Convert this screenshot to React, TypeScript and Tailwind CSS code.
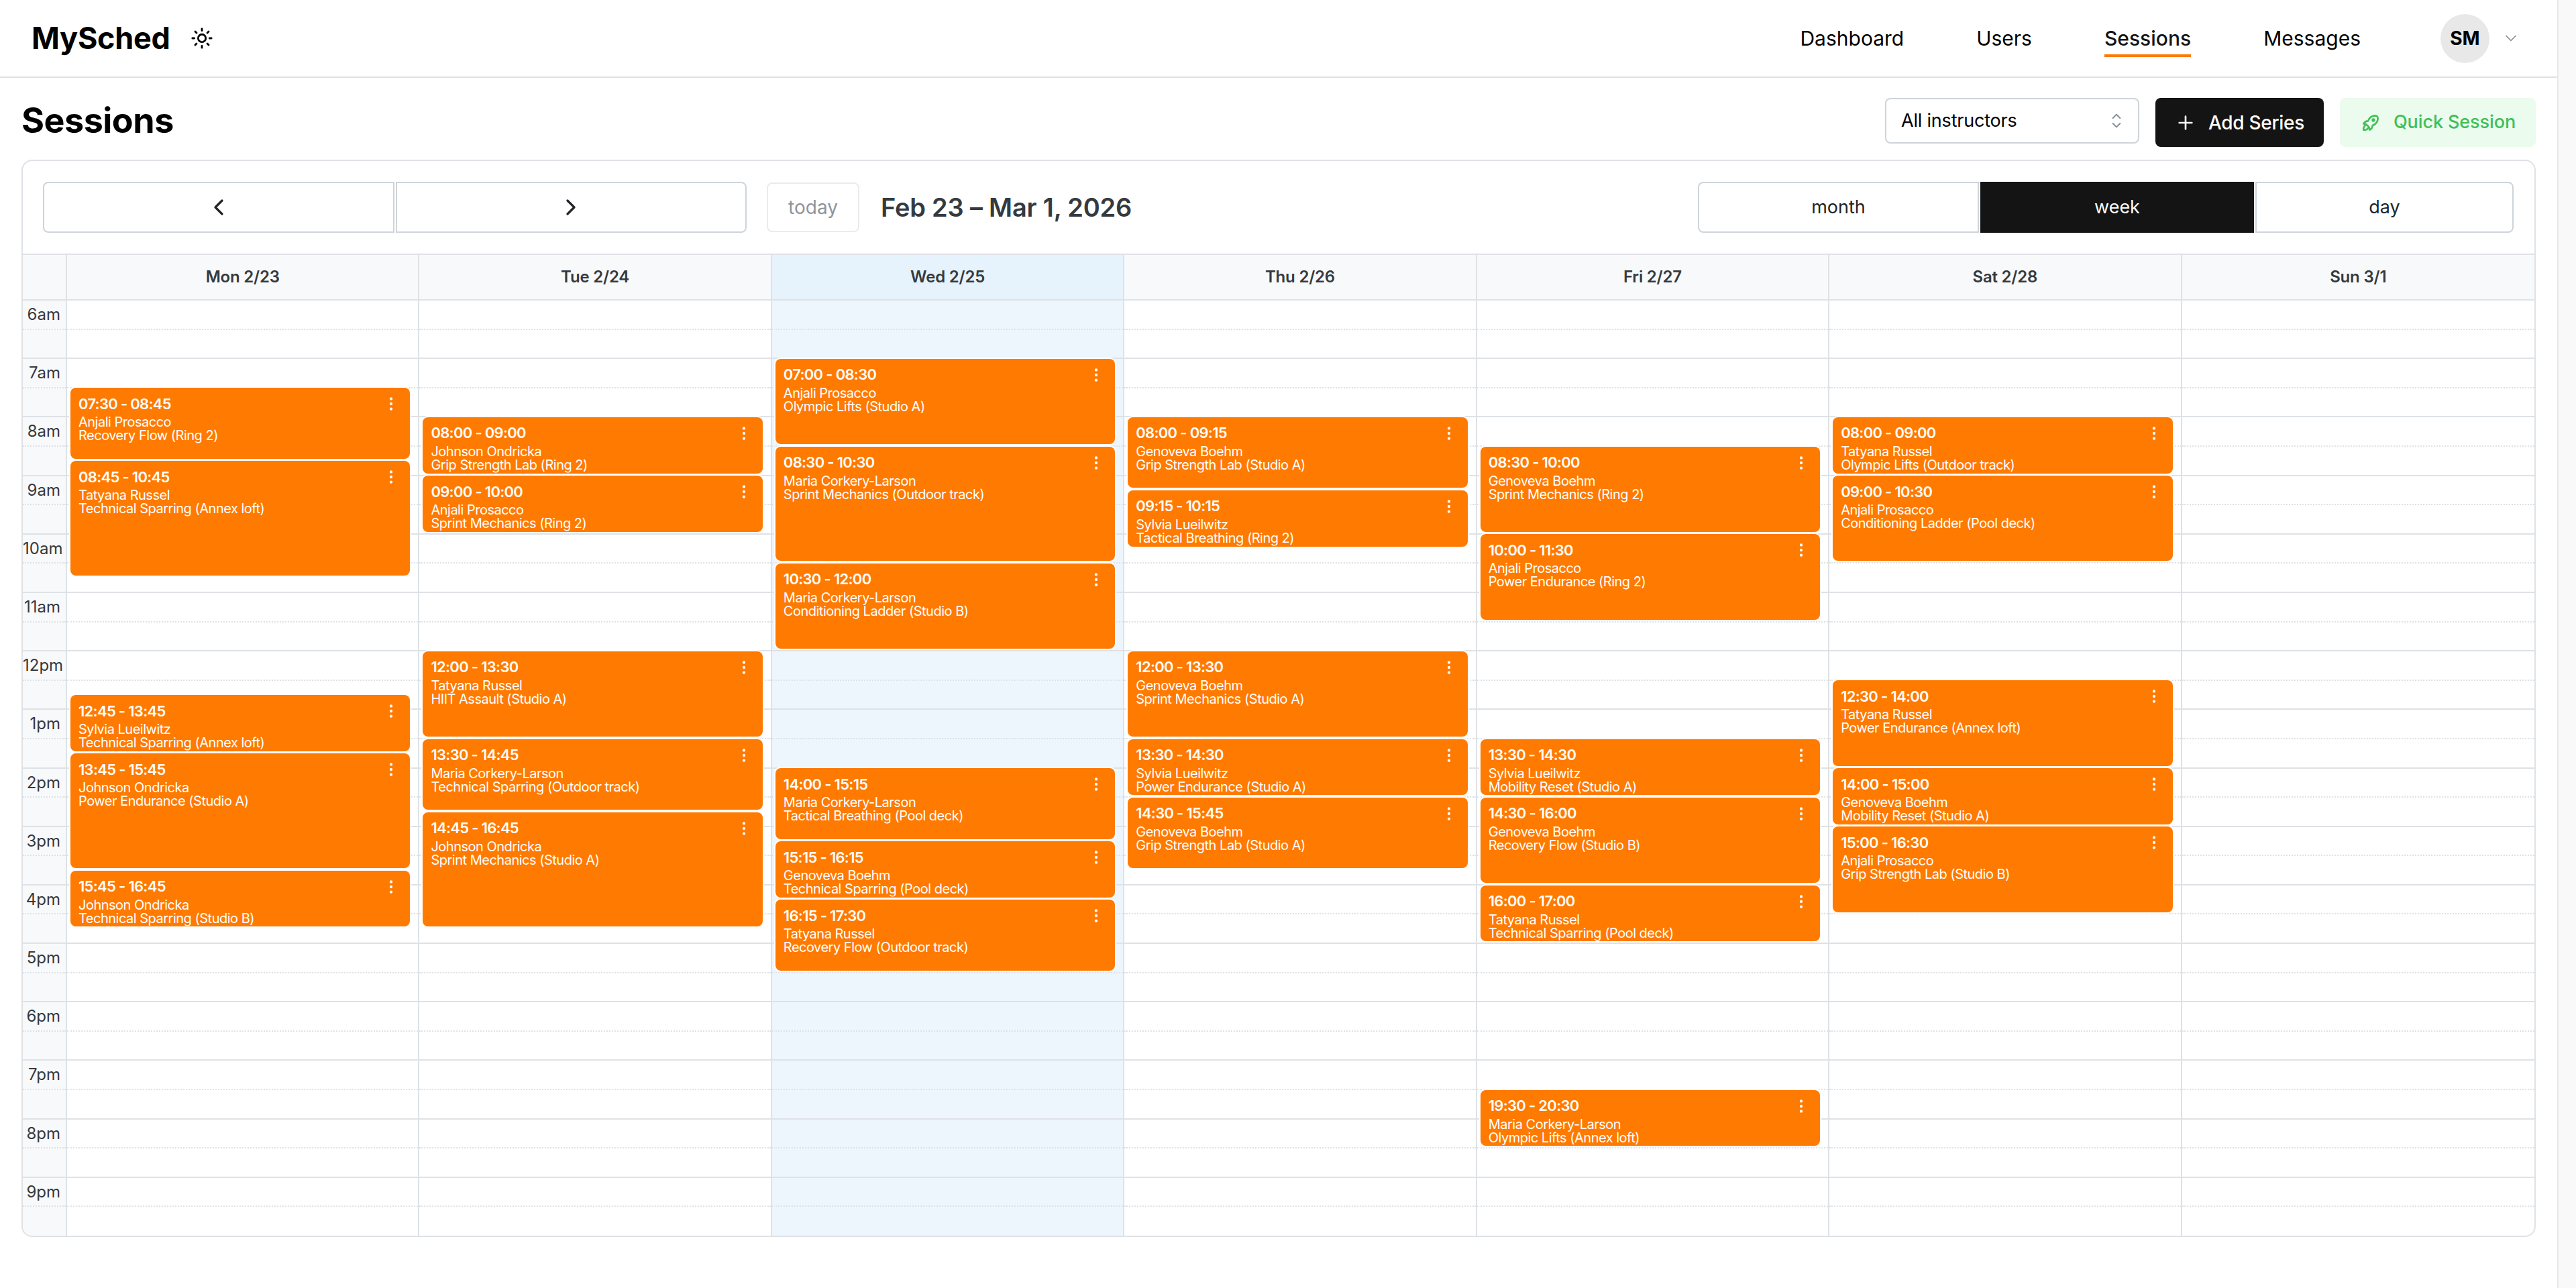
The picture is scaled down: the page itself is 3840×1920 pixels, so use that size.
import { ChevronDown, ChevronLeft, ChevronRight, EllipsisVertical } from "lucide-react";
import { TbPlus, TbRocket, TbSelector, TbSunHigh } from "react-icons/tb";

const HOUR = 87.2;

type Session = { start: string; end: string; who: string; what: string };

const days: { label: string; today?: boolean; sessions: Session[] }[] = [
  {
    label: "Mon 2/23",
    sessions: [
      { start: "07:30", end: "08:45", who: "Anjali Prosacco", what: "Recovery Flow (Ring 2)" },
      { start: "08:45", end: "10:45", who: "Tatyana Russel", what: "Technical Sparring (Annex loft)" },
      { start: "12:45", end: "13:45", who: "Sylvia Lueilwitz", what: "Technical Sparring (Annex loft)" },
      { start: "13:45", end: "15:45", who: "Johnson Ondricka", what: "Power Endurance (Studio A)" },
      { start: "15:45", end: "16:45", who: "Johnson Ondricka", what: "Technical Sparring (Studio B)" },
    ],
  },
  {
    label: "Tue 2/24",
    sessions: [
      { start: "08:00", end: "09:00", who: "Johnson Ondricka", what: "Grip Strength Lab (Ring 2)" },
      { start: "09:00", end: "10:00", who: "Anjali Prosacco", what: "Sprint Mechanics (Ring 2)" },
      { start: "12:00", end: "13:30", who: "Tatyana Russel", what: "HIIT Assault (Studio A)" },
      { start: "13:30", end: "14:45", who: "Maria Corkery-Larson", what: "Technical Sparring (Outdoor track)" },
      { start: "14:45", end: "16:45", who: "Johnson Ondricka", what: "Sprint Mechanics (Studio A)" },
    ],
  },
  {
    label: "Wed 2/25",
    today: true,
    sessions: [
      { start: "07:00", end: "08:30", who: "Anjali Prosacco", what: "Olympic Lifts (Studio A)" },
      { start: "08:30", end: "10:30", who: "Maria Corkery-Larson", what: "Sprint Mechanics (Outdoor track)" },
      { start: "10:30", end: "12:00", who: "Maria Corkery-Larson", what: "Conditioning Ladder (Studio B)" },
      { start: "14:00", end: "15:15", who: "Maria Corkery-Larson", what: "Tactical Breathing (Pool deck)" },
      { start: "15:15", end: "16:15", who: "Genoveva Boehm", what: "Technical Sparring (Pool deck)" },
      { start: "16:15", end: "17:30", who: "Tatyana Russel", what: "Recovery Flow (Outdoor track)" },
    ],
  },
  {
    label: "Thu 2/26",
    sessions: [
      { start: "08:00", end: "09:15", who: "Genoveva Boehm", what: "Grip Strength Lab (Studio A)" },
      { start: "09:15", end: "10:15", who: "Sylvia Lueilwitz", what: "Tactical Breathing (Ring 2)" },
      { start: "12:00", end: "13:30", who: "Genoveva Boehm", what: "Sprint Mechanics (Studio A)" },
      { start: "13:30", end: "14:30", who: "Sylvia Lueilwitz", what: "Power Endurance (Studio A)" },
      { start: "14:30", end: "15:45", who: "Genoveva Boehm", what: "Grip Strength Lab (Studio A)" },
    ],
  },
  {
    label: "Fri 2/27",
    sessions: [
      { start: "08:30", end: "10:00", who: "Genoveva Boehm", what: "Sprint Mechanics (Ring 2)" },
      { start: "10:00", end: "11:30", who: "Anjali Prosacco", what: "Power Endurance (Ring 2)" },
      { start: "13:30", end: "14:30", who: "Sylvia Lueilwitz", what: "Mobility Reset (Studio A)" },
      { start: "14:30", end: "16:00", who: "Genoveva Boehm", what: "Recovery Flow (Studio B)" },
      { start: "16:00", end: "17:00", who: "Tatyana Russel", what: "Technical Sparring (Pool deck)" },
      { start: "19:30", end: "20:30", who: "Maria Corkery-Larson", what: "Olympic Lifts (Annex loft)" },
    ],
  },
  {
    label: "Sat 2/28",
    sessions: [
      { start: "08:00", end: "09:00", who: "Tatyana Russel", what: "Olympic Lifts (Outdoor track)" },
      { start: "09:00", end: "10:30", who: "Anjali Prosacco", what: "Conditioning Ladder (Pool deck)" },
      { start: "12:30", end: "14:00", who: "Tatyana Russel", what: "Power Endurance (Annex loft)" },
      { start: "14:00", end: "15:00", who: "Genoveva Boehm", what: "Mobility Reset (Studio A)" },
      { start: "15:00", end: "16:30", who: "Anjali Prosacco", what: "Grip Strength Lab (Studio B)" },
    ],
  },
  { label: "Sun 3/1", sessions: [] },
];

const hours = ["6am", "7am", "8am", "9am", "10am", "11am", "12pm", "1pm", "2pm", "3pm", "4pm", "5pm", "6pm", "7pm", "8pm", "9pm"];

const toHours = (t: string) => {
  const [h, m] = t.split(":").map(Number);
  return h + m / 60;
};

function HourSlot({ last }: { last: boolean }) {
  return (
    <div className={last ? "h-[86px]" : "h-[87.2px] border-b-2 border-[#dee2e6]"}>
      <div className="h-[43.6px] border-b-2 border-dotted border-[#dee2e6]" />
    </div>
  );
}

function SessionCard({ s }: { s: Session }) {
  const top = (toHours(s.start) - 6) * HOUR - 0.5;
  const height = (toHours(s.end) - toHours(s.start)) * HOUR - 3.5;
  return (
    <div
      className="absolute left-[5px] right-[12px] overflow-hidden rounded-[8px] bg-[#ff7a00] pl-[12px] pr-[15px] pt-[8px] text-white shadow-[0_0_0_2px_#ffffff]"
      style={{ top, height }}
    >
      <div className="flex h-[32px] items-center justify-between">
        <span className="text-[22px] font-semibold tracking-[-0.7px]">
          {s.start} - {s.end}
        </span>
        <EllipsisVertical size={26} strokeWidth={2} />
      </div>
      <div className="mt-[1px] text-[20px] leading-[20px] tracking-[-0.5px]">
        <div>{s.who}</div>
        <div>{s.what}</div>
      </div>
    </div>
  );
}

export default function App() {
  return (
    <div className="flex h-screen w-full overflow-hidden bg-white font-['Inter',sans-serif] text-black">
      <div className="flex min-w-0 flex-1 flex-col">
        <header className="flex h-[116px] items-center justify-between border-b-2 border-[#dee2e6] pl-[47px] pr-[55px]">
          <div className="flex items-center gap-[30px]">
            <span className="text-[45px] font-bold tracking-[-0.3px]">MySched</span>
            <TbSunHigh size={34} strokeWidth={2} />
          </div>
          <div className="flex items-center">
            <nav className="flex items-center gap-[108px] text-[30px]">
              <span>Dashboard</span>
              <span>Users</span>
              <span className="relative font-medium text-[#141414]">
                Sessions
                <span className="absolute -bottom-[5px] left-0 right-0 h-[4px] bg-[#ff7a00]" />
              </span>
              <span>Messages</span>
            </nav>
            <div className="ml-[119px] flex items-center gap-[18px]">
              <div className="flex h-[73px] w-[73px] items-center justify-center rounded-full bg-[#e8e8e8] text-[28px] font-bold">SM</div>
              <ChevronDown size={28} strokeWidth={1.5} className="text-[#868e96]" />
            </div>
          </div>
        </header>

        <main className="flex flex-1 flex-col px-[32px]">
          <div className="flex h-[122px] items-start justify-between pt-[30px]">
            <h1 className="text-[52px] font-bold leading-[68px] tracking-[-0.5px]">Sessions</h1>
            <div className="flex items-start gap-[24px]">
              <div className="flex h-[68px] w-[379px] items-center justify-between rounded-[8px] border-2 border-[#ced4da] pl-[22px] pr-[16px] text-[27px] tracking-[-0.2px]">
                <span>All instructors</span>
                <TbSelector size={32} strokeWidth={1.5} className="text-[#868e96]" />
              </div>
              <button className="flex h-[73px] w-[251px] items-center justify-center gap-[18px] rounded-[8px] bg-[#141414] text-[28px] font-medium tracking-[-0.3px] text-white">
                <TbPlus size={32} strokeWidth={2} />
                Add Series
              </button>
              <button className="flex h-[73px] w-[292px] items-center justify-center gap-[18px] rounded-[8px] bg-[#ebfbee] text-[27px] font-medium tracking-[-0.1px] text-[#40c057]">
                <TbRocket size={32} strokeWidth={2} />
                Quick Session
              </button>
            </div>
          </div>

          <section className="flex h-[1606px] flex-col overflow-hidden rounded-[16px] border-2 border-[#dee2e6]">
            <div className="flex h-[138px] shrink-0 items-center justify-between pl-[30px] pr-[31px]">
              <div className="flex items-center">
                <div className="flex h-[76px] w-[1049px] gap-[2px]">
                  <button className="flex flex-1 items-center justify-center rounded-l-[8px] border-2 border-[#ced4da] text-[#212529]">
                    <ChevronLeft size={40} strokeWidth={2} />
                  </button>
                  <button className="flex flex-1 items-center justify-center rounded-r-[8px] border-2 border-[#ced4da] text-[#212529]">
                    <ChevronRight size={40} strokeWidth={2} />
                  </button>
                </div>
                <button className="ml-[30px] flex h-[74px] w-[138px] items-center justify-center rounded-[8px] border-2 border-[#e9ecef] text-[28px] text-[#8f959b]">today</button>
                <h2 className="ml-[32px] text-[38px] font-semibold tracking-[-0.2px] text-[#343a40]">Feb 23 – Mar 1, 2026</h2>
              </div>
              <div className="flex h-[76px] w-[1216px] text-[27px] text-[#212529]">
                <button className="w-[419px] rounded-l-[8px] border-2 border-[#ced4da]">month</button>
                <button className="ml-[2px] w-[408px] bg-[#141414] text-white">week</button>
                <button className="ml-[2px] flex-1 rounded-r-[8px] border-2 border-[#ced4da]">day</button>
              </div>
            </div>

            <div className="grid h-[70px] shrink-0 grid-cols-[66px_repeat(7,1fr)] border-y-2 border-[#dee2e6] bg-[#f8f9fa] text-[24px] font-semibold tracking-[-0.2px] text-[#343a40]">
              <div className="border-r-2 border-[#dee2e6]" />
              {days.map((d) => (
                <div key={d.label} className={`flex items-center justify-center border-r-2 border-[#dee2e6] last:border-r-0 ${d.today ? "bg-[#e6f2fc]" : ""}`}>
                  {d.label}
                </div>
              ))}
            </div>

            <div className="grid flex-1 grid-cols-[66px_repeat(7,1fr)]">
              <div className="border-r-2 border-[#dee2e6] bg-[#f8f9fa] text-[24px] text-[#343a40]">
                {hours.map((h, i) => (
                  <div key={h} className={i === hours.length - 1 ? "h-[86px]" : "h-[87.2px] border-b-2 border-[#dee2e6]"}>
                    <div className="h-[43.6px] border-b-2 border-dotted border-[#dee2e6] pr-[8px] pt-[3px] text-right leading-[36px]">{h}</div>
                  </div>
                ))}
              </div>
              {days.map((d) => (
                <div key={d.label} className={`relative border-r-2 border-[#dee2e6] last:border-r-0 ${d.today ? "bg-[#edf5fd]" : ""}`}>
                  {hours.map((h, i) => (
                    <HourSlot key={h} last={i === hours.length - 1} />
                  ))}
                  {d.sessions.map((s) => (
                    <SessionCard key={s.start} s={s} />
                  ))}
                </div>
              ))}
            </div>
          </section>
        </main>
      </div>
      {/* page scrollbar */}
      <div className="w-[28px] shrink-0 border-l-2 border-[#e8e8e8] bg-[#f9f9f9]" />
    </div>
  );
}
